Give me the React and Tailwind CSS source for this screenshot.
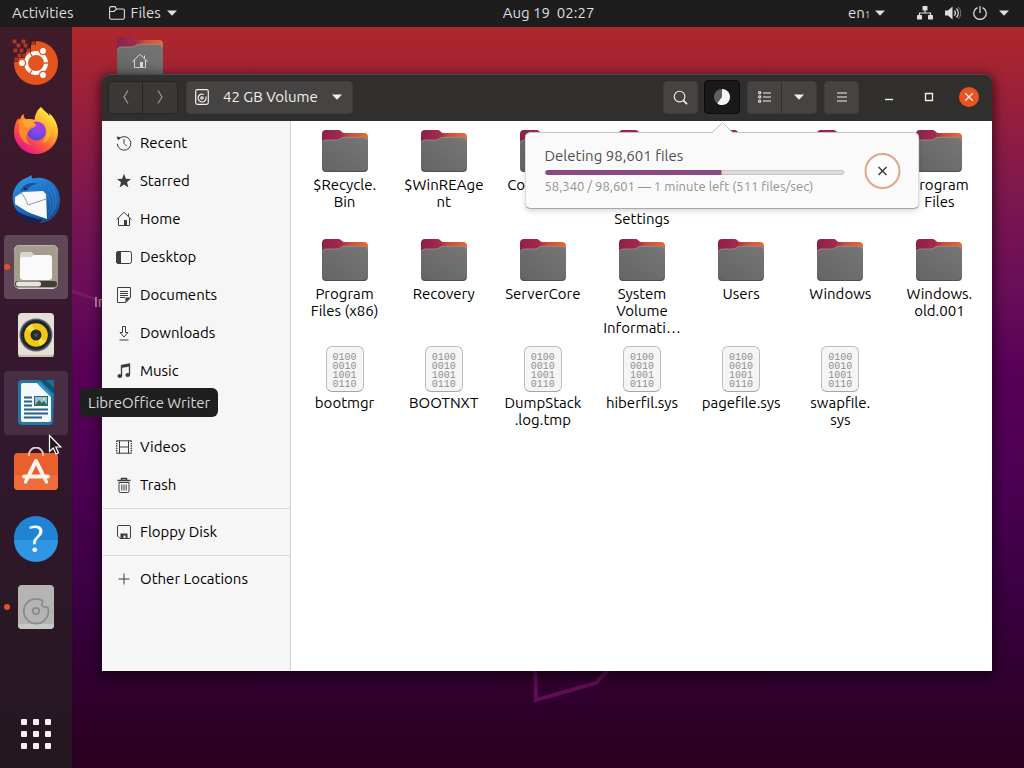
import { useState } from 'react';

function Caret({ className = 'w-[10px] h-[6px]' }) {
  return (
    <svg viewBox="0 0 10 6" className={className} fill="currentColor" aria-hidden="true">
      <path d="M0 .5h10L5 5.8z" />
    </svg>
  );
}

// 16px symbolic icons
const symbolic = {
  recent: (
    <>
      <path d="M2.6 4.4A6.8 6.8 0 1 1 1.3 8.8" />
      <path d="M8 4v4.4l2.8 2.8" />
      <path d="M.6 1.6l4.2.6-2.8 3z" fill="currentColor" stroke="none" />
    </>
  ),
  starred: (
    <path d="M8 .8l1.9 4.9 5.1.3-4 3.3 1.4 5.1L8 11.5l-4.4 2.9L5 9.3 1 6l5.1-.3z" fill="currentColor" stroke="none" />
  ),
  home: (
    <>
      <path d="M.6 8.6L8 1.2l7.4 7.4M2.500 7v7.500h11V7M12.500 2.500v3" />
      <path d="M8 9h3v5.500H8z" fill="currentColor" stroke="none" />
    </>
  ),
  desktop: (
    <>
      <rect x=".5" y="2.5" width="15" height="12" rx="2" />
      <path d="M2.500 2.500h2v12h-2a2 2 0 0 1-2-2v-8a2 2 0 0 1 2-2z" fill="currentColor" />
    </>
  ),
  documents: (
    <>
      <path d="M1.500.5h13v10l-4.500 5H1.500z" />
      <path d="M4 4.500h8M4 6.500h8M4 8.500h8M4 10.500h5" />
      <path d="M9.500 15.500v-5h5z" fill="currentColor" stroke="none" />
    </>
  ),
  downloads: <path d="M6.500 1.500h3v6H12L8 12 4 7.500h2.500zM3.500 15h9" />,
  music: (
    <>
      <path d="M5.500 13V2.500l8-1.500v10" strokeWidth="1.3" />
      <path d="M5 2.300L14 .8v2.700L5 5z" fill="currentColor" stroke="none" />
      <ellipse cx="3.8" cy="13" rx="2.4" ry="2" fill="currentColor" stroke="none" />
      <ellipse cx="11.8" cy="12" rx="2.4" ry="2" fill="currentColor" stroke="none" />
    </>
  ),
  pictures: (
    <>
      <rect x=".5" y="2.5" width="15" height="11" />
      <path d="M2 12l4-5 3 3 2-2 3 4z" fill="currentColor" stroke="none" />
    </>
  ),
  videos: (
    <>
      <path d="M.7 1.500v13M15.300 1.500v13" strokeWidth="1.4" strokeDasharray="1.4 1" />
      <path d="M3.500 1.500v13M12.500 1.500v13M1 1.800h14M1 14.200h14M3.500 8h9" />
    </>
  ),
  trash: (
    <>
      <path d="M1.500 3.500h13M5.500 3V1.500h5V3" strokeWidth="1.4" />
      <path d="M3 5.500v8.500a1.500 1.500 0 0 0 1.500 1.500h7A1.500 1.500 0 0 0 13 14V5.500zM5.800 7.500v6M8 7.500v6M10.200 7.500v6" />
    </>
  ),
  floppy: (
    <>
      <path d="M3 1.500h10a1.500 1.500 0 0 1 1.500 1.500v10a1.500 1.500 0 0 1-1.500 1.500H4L1.500 12V3A1.500 1.500 0 0 1 3 1.500z" />
      <path d="M4.500 14.500v-5h7v5h-2v-3h-2v3z" fill="currentColor" stroke="none" />
    </>
  ),
  plus: <path d="M8 2.500v11M2.500 8h11" />,
};

function Symbolic({ name, className = 'size-4' }) {
  return (
    <svg viewBox="0 0 16 16" className={className} fill="none" stroke="currentColor" strokeWidth="1" aria-hidden="true">
      {symbolic[name]}
    </svg>
  );
}

function FolderIcon() {
  return (
    <svg viewBox="0 0 46 42" className="w-[46px] h-[42px] shrink-0" aria-hidden="true">
      <defs>
        <linearGradient id="folder-back" x1="0" x2="1">
          <stop offset="0" stopColor="#8b2148" />
          <stop offset="0.42" stopColor="#a32b4c" />
          <stop offset="0.6" stopColor="#c94f38" />
          <stop offset="1" stopColor="#e96a30" />
        </linearGradient>
        <linearGradient id="folder-front" x1="0" y1="1" x2="1" y2="0">
          <stop offset="0" stopColor="#646464" />
          <stop offset="1" stopColor="#767676" />
        </linearGradient>
      </defs>
      <path d="M4 0h13c2 0 3 3 5 3h20a4 4 0 0 1 4 4v14H0V4a4 4 0 0 1 4-4z" fill="url(#folder-back)" />
      <path d="M0 14a4 4 0 0 1 4-4h11c3 0 4-2.700 7-2.700h20a4 4 0 0 1 4 4V38a4 4 0 0 1-4 4H4a4 4 0 0 1-4-4z" fill="url(#folder-front)" />
      <path d="M.5 13a3.500 3.500 0 0 1 3.500-3h11c3 0 4-2.700 7-2.700h20a3.500 3.500 0 0 1 3.500 3" fill="none" stroke="#a08f90" strokeWidth="0.8" />
      <path d="M1 39a4 4 0 0 0 3 2.500h38a4 4 0 0 0 3-2.500" fill="none" stroke="#505050" />
    </svg>
  );
}

function BinaryIcon() {
  return (
    <div className="w-[38px] h-[46px] rounded-md border border-[#bdbdbd] border-b-[#a5a5a5] bg-[#f5f5f5] pt-[6px] text-center font-['Liberation_Mono',monospace] text-[10px] leading-[9px] text-[#8f8f8f]">
      <div>0100</div>
      <div>0010</div>
      <div>1001</div>
      <div>0110</div>
    </div>
  );
}

function UbuntuLogo() {
  const bits = [[1, 2], [10, 2], [5, 6], [12, 6], [20, 4], [2, 11], [8, 11], [15, 11], [6, 16], [11, 16], [3, 20]];
  return (
    <svg viewBox="0 1 48 48" className="size-12" aria-hidden="true">
      <circle cx="24" cy="25" r="22" fill="#e4541f" />
      <path d="M0 0h24v7h-5v7h-5v6H7v4H0z" fill="#451a28" />
      {bits.map(([x, y]) => (
        <rect key={`${x}-${y}`} x={x} y={y} width="3" height="3" fill="#a8301c" stroke="#c94a28" strokeWidth="0.6" />
      ))}
      <circle cx="24" cy="25" r="10" fill="none" stroke="#fff" strokeWidth="4" />
      <path d="M32 25h5M20 18l-3-5M20 32l-3 5" stroke="#e4541f" strokeWidth="1.3" />
      <g fill="#fff" stroke="#e4541f" strokeWidth="1.4">
        <circle cx="31" cy="13" r="3.6" />
        <circle cx="10" cy="25" r="3.6" />
        <circle cx="31" cy="37" r="3.6" />
      </g>
    </svg>
  );
}

function FirefoxLogo() {
  return (
    <svg viewBox="0 0 48 48" className="size-12" aria-hidden="true">
      <defs>
        <linearGradient id="ff-body" x1="0.85" y1="0.1" x2="0.25" y2="0.95">
          <stop offset="0" stopColor="#fff04a" />
          <stop offset="0.35" stopColor="#ffae28" />
          <stop offset="0.65" stopColor="#ff5a3c" />
          <stop offset="1" stopColor="#e8158c" />
        </linearGradient>
        <radialGradient id="ff-globe" cx="0.6" cy="0.25" r="0.8">
          <stop offset="0" stopColor="#b833e1" />
          <stop offset="0.5" stopColor="#7a4be8" />
          <stop offset="1" stopColor="#5a3fc8" />
        </radialGradient>
      </defs>
      <path d="M29 0c2 3 6 5 8.500 9 0-1 0-2-.4-3C42 10 46 17 46 25c0 12-10 22-22 22S2 37 2 25c0-6 2-11 4.500-14 .2 2 .6 3 1.200 4C8 11 9.500 8 11.500 7c0 3 1.500 5 3 5.500 2-.8 6-.5 8 .5.500-5 2.500-10 6.500-13z" fill="url(#ff-body)" />
      <circle cx="24.5" cy="24" r="9.5" fill="url(#ff-globe)" />
      <path d="M7 12c3 1 5 0 8 1 3 .5 5 3 9 5 0 2-4 3-5.500 4-1 .8-2 2-3.500 5-2 5 1 9 4 11-9-2-13-10-12-18z" fill="#ff8a2a" />
      <path d="M10 14c4-3 10-2 14 4-3 2-6 1-9 3-2-1-4-4-5-7z" fill="#ffa436" />
      <path d="M35 21c1 6-1 12-6 15 6 0 10-6 9-12 0-6-4-9-8-12 2 3 4 5 5 9z" fill="#ffbd2f" opacity="0.8" />
    </svg>
  );
}

function ThunderbirdLogo() {
  return (
    <svg viewBox="0 0 48 48" className="size-12" aria-hidden="true">
      <defs>
        <linearGradient id="tb-body" x1="0.3" y1="0" x2="0.8" y2="1">
          <stop offset="0" stopColor="#2c93e0" />
          <stop offset="0.5" stopColor="#1d6cc0" />
          <stop offset="1" stopColor="#174a8e" />
        </linearGradient>
      </defs>
      <path d="M20 0c-1 2 0 3 1 3.500C36 0 48 11 48 25c0 13-9 23-21 23 2-1 3-2 4-4-9 2-21-1-26-8C-2 27-1 13 10 5c3-2 7-3 10-5z" fill="url(#tb-body)" />
      <path d="M3 22l8-5 20-1 3 3 1 25c-5-2-13-4-21-8L3 29z" fill="#f7f9fb" />
      <path d="M8 17c4 3 6 8 8 13l18-6" fill="none" stroke="#8d9aa8" strokeWidth="1" />
      <path d="M8 18c2-8 9-12 18-9-6 0-9 3-11 7-3-2-5-1-7 2z" fill="#174f96" />
      <circle cx="13" cy="14" r="1.1" fill="#0a2140" />
      <path d="M3 34c4 4 9 6 16 8 5 1.500 8 3 11 3-2 2-5 3-8 3C13 48 6 42 3 34z" fill="#1c2152" />
      <path d="M36 13c7 8 8 20 0 29M40 12c6 9 5 21-1 28M34 18c5 6 6 14 2 20" fill="none" stroke="#57aef0" strokeWidth="0.9" opacity="0.4" />
    </svg>
  );
}

function FilesLogo() {
  return (
    <svg viewBox="0 0 48 48" className="size-12" aria-hidden="true">
      <rect x="2" y="2" width="44" height="44" rx="5" fill="#a49c8c" />
      <path d="M2.500 7a5 5 0 0 1 5-4.500h33a5 5 0 0 1 5 4.500" fill="none" stroke="#bdb6a9" />
      <path d="M8 12a3 3 0 0 1 3-3h8c2 0 2 3 4 3h12v8H8z" fill="#dad5cb" />
      <path d="M8 17c0-2 1-3 3-3h7c2 0 3-2 5-2h14a3 3 0 0 1 3 3v19a3 3 0 0 1-3 3H11a3 3 0 0 1-3-3z" fill="#fbfafa" />
      <rect x="3" y="38" width="42" height="6" rx="3" fill="#3f3c39" />
      <rect x="4" y="38.5" width="25" height="5" rx="2.5" fill="#e6e4e0" />
      <path d="M6 45.500h36" stroke="#d8d3ca" />
    </svg>
  );
}

function RhythmboxLogo() {
  return (
    <svg viewBox="0 0 48 48" className="size-12" aria-hidden="true">
      <rect x="6" y="2" width="36" height="44" rx="4" fill="#e6dfd6" />
      <rect x="6.5" y="44" width="35" height="2" rx="1" fill="#c9c0b6" />
      <circle cx="24" cy="24" r="16.5" fill="#55606a" />
      <circle cx="24" cy="24" r="15" fill="#22262b" />
      <circle cx="24" cy="24" r="11.8" fill="#f0c814" />
      <path d="M24 24L14 17.700A11.800 11.800 0 0 1 20 12.900zM24 24l10 6.300a11.800 11.800 0 0 1-6 4.800z" fill="#fadf45" />
      <circle cx="24" cy="24" r="5.5" fill="#292b2c" />
      <circle cx="24" cy="24" r="2" fill="#4a4a48" />
    </svg>
  );
}

function WriterLogo() {
  return (
    <svg viewBox="0 0 48 48" className="size-12" aria-hidden="true">
      <path d="M10 1h32v16l-1 25a4 4 0 0 1-4 4H10a4 4 0 0 1-4-4V5a4 4 0 0 1 4-4z" fill="#1f7ba6" />
      <path d="M28 1h14v14z" fill="#11506f" />
      <path d="M34 1h8v8z" fill="#1c6e95" />
      <path d="M11 4h14l14 14v23a2 2 0 0 1-2 2H11a2 2 0 0 1-2-2V6a2 2 0 0 1 2-2z" fill="#f4f9fb" />
      <path d="M25 4l14 14v-3L28 3z" fill="#2e9ac5" />
      <path d="M12 18.500h8M12 22.500h8M12 26.500h8M12 30.500h24M12 34.500h24M12 38.500h18" stroke="#2a6384" strokeWidth="1.8" />
      <rect x="22" y="17" width="14" height="10" fill="#2a6384" />
      <rect x="23" y="18" width="12" height="8" fill="#8fc4dc" />
      <path d="M23 26l4-5 3 3 2-2 3 4z" fill="#3a6b3a" />
      <circle cx="32" cy="20" r="1.2" fill="#f2dd63" />
    </svg>
  );
}

function SoftwareLogo() {
  return (
    <svg viewBox="0 0 48 48" className="size-12" aria-hidden="true">
      <rect x="2" y="6" width="44" height="37" rx="4" fill="#e95f2d" />
      <path d="M2 28h44v11a4 4 0 0 1-4 4H6a4 4 0 0 1-4-4z" fill="#ef7440" opacity="0.7" />
      <path d="M17 9V7.500a7 7 0 0 1 14 0V9" fill="none" stroke="#f6cdb8" strokeWidth="1.8" />
      <g stroke="#fdf3ea" fill="none" strokeLinejoin="round" strokeLinecap="round">
        <path d="M17.500 27L24 14l6.500 13" strokeWidth="4" />
        <path d="M12 29.500h24" strokeWidth="4" />
        <path d="M15.500 31l-2 4M32.500 31l2 4" strokeWidth="3.5" />
      </g>
    </svg>
  );
}

function HelpLogo() {
  return (
    <svg viewBox="0 0 48 48" className="size-12" aria-hidden="true">
      <circle cx="24" cy="23" r="22" fill="#2183d5" />
      <path d="M2 25h44a22 22 0 0 1-44 0z" fill="#2e96e2" />
      <text x="24" y="37" textAnchor="middle" fontFamily="Ubuntu, Noto Sans, sans-serif" fontSize="38" fill="#fff">?</text>
    </svg>
  );
}

function DiskLogo() {
  return (
    <svg viewBox="0 0 48 48" className="size-12" aria-hidden="true">
      <rect x="6" y="2" width="36" height="44" rx="4" fill="#b5b4b4" />
      <path d="M6 41h36v1a4 4 0 0 1-4 4H10a4 4 0 0 1-4-4z" fill="#c9c8c8" />
      <path d="M35.500 23.500A12.300 12.300 0 1 1 31 18" fill="none" stroke="#8c8b8b" strokeWidth="1.8" />
      <path d="M31 18l-1.500 4 3 2.500 3-.8" fill="none" stroke="#8c8b8b" strokeWidth="1.5" />
      <circle cx="24" cy="28" r="3.2" fill="none" stroke="#8c8b8b" strokeWidth="1.8" />
    </svg>
  );
}

const dockItems = [
  { name: 'Install Ubuntu', icon: UbuntuLogo },
  { name: 'Firefox', icon: FirefoxLogo },
  { name: 'Thunderbird Mail', icon: ThunderbirdLogo },
  { name: 'Files', icon: FilesLogo, running: true, className: 'bg-white/20' },
  { name: 'Rhythmbox', icon: RhythmboxLogo },
  { name: 'LibreOffice Writer', icon: WriterLogo, tooltip: true, className: 'bg-white/10' },
  { name: 'Ubuntu Software', icon: SoftwareLogo },
  { name: 'Help', icon: HelpLogo },
  { name: 'Disk', icon: DiskLogo, running: true },
];

const places = [
  { name: 'Recent', icon: 'recent' },
  { name: 'Starred', icon: 'starred' },
  { name: 'Home', icon: 'home' },
  { name: 'Desktop', icon: 'desktop' },
  { name: 'Documents', icon: 'documents' },
  { name: 'Downloads', icon: 'downloads' },
  { name: 'Music', icon: 'music' },
  { name: 'Pictures', icon: 'pictures' },
  { name: 'Videos', icon: 'videos' },
  { name: 'Trash', icon: 'trash' },
];

const entries = [
  { label: '$Recycle.\nBin' },
  { label: '$WinREAge\nnt' },
  { label: 'Config.Msi' },
  { label: 'Documents\nand\nSettings' },
  { label: 'inetpub' },
  { label: 'PerfLogs' },
  { label: 'Program\nFiles' },
  { label: 'Program\nFiles (x86)' },
  { label: 'Recovery' },
  { label: 'ServerCore' },
  { label: 'System\nVolume\nInformati…' },
  { label: 'Users' },
  { label: 'Windows' },
  { label: 'Windows.\nold.001' },
  { label: 'bootmgr', file: true },
  { label: 'BOOTNXT', file: true },
  { label: 'DumpStack\n.log.tmp', file: true },
  { label: 'hiberfil.sys', file: true },
  { label: 'pagefile.sys', file: true },
  { label: 'swapfile.\nsys', file: true },
];

function TopBar() {
  return (
    <header className="flex items-center h-[27px] shrink-0 pb-px bg-[#1d1d1d] text-[#dedede]">
      <div className="flex items-center grow basis-[88px]">
        <button className="pl-3">Activities</button>
        <button className="flex items-center ml-[35px]">
          <svg viewBox="0 0 16 14" className="w-4 h-[14px] mr-[6px]" fill="none" stroke="currentColor" strokeWidth="1.1" aria-hidden="true">
            <path d="M.6 11.500V2A1.400 1.400 0 0 1 2 .6h4L7.500 3h6.500a1.400 1.400 0 0 1 1.400 1.400v7.200a1.600 1.600 0 0 1-1.600 1.600H2.200A1.600 1.600 0 0 1 .6 11.500zM.6 5.500H5L7.500 3" />
          </svg>
          Files
          <Caret className="w-[10px] h-[6px] ml-[6px]" />
        </button>
      </div>
      <button>Aug 19&nbsp; 02:27</button>
      <div className="flex items-center justify-end grow basis-0 pr-[15px]">
        <button className="flex items-center mr-8">
          en
          <span className="pt-1 text-[9px] leading-3">1</span>
          <Caret className="w-[10px] h-[6px] ml-[5px]" />
        </button>
        <button className="flex items-center" aria-label="System menu">
          <svg viewBox="0 0 16 14" className="w-4 h-[14px]" aria-hidden="true">
            <g fill="currentColor">
              <rect x="5.5" y="0" width="5" height="4.5" rx=".6" />
              <rect x="0" y="9" width="5" height="4.5" rx=".6" />
              <rect x="11" y="9" width="5" height="4.5" rx=".6" />
            </g>
            <path d="M8 4v3M2.500 9.500V7h11v2.500" fill="none" stroke="currentColor" strokeWidth="1.2" />
          </svg>
          <svg viewBox="0 0 16 14" className="w-4 h-[14px] ml-3" aria-hidden="true">
            <path d="M0 4.500h3L7.500.5v13L3 9.500H0z" fill="currentColor" />
            <path d="M9.500 4.500a4 4 0 0 1 0 5M11.500 2.500a6.500 6.500 0 0 1 0 9" fill="none" stroke="currentColor" strokeWidth="1.2" />
            <path d="M13.300 1a8.500 8.500 0 0 1 0 12" fill="none" stroke="#777" />
          </svg>
          <svg viewBox="0 0 14 14" className="size-[14px] ml-3" fill="none" stroke="currentColor" strokeWidth="1.2" aria-hidden="true">
            <path d="M4.500 1.600a6.200 6.200 0 1 0 5 0M7 0v7" />
          </svg>
          <Caret className="w-[10px] h-[6px] ml-3" />
        </button>
      </div>
    </header>
  );
}

function Dock() {
  return (
    <nav className="relative z-20 flex flex-col items-center gap-1 w-[72px] shrink-0 pt-1 pb-[2px] bg-linear-to-b from-[#401b29] via-[#34172f] to-[#241820]">
      {dockItems.map(({ name, icon: Icon, running, tooltip, className }) => (
        <button
          key={name}
          aria-label={name}
          className={`relative flex items-center justify-center size-16 rounded ${className || ''}`}
        >
          <Icon />
          {running && <span className="absolute left-0 size-[6px] rounded-full bg-[#e2512a]" />}
          {tooltip && (
            <span className="absolute left-[76px] top-[17px] px-2 h-[29px] leading-[29px] rounded-md bg-[#1f1f1f] text-[#d6d6d6] whitespace-nowrap">
              {name}
            </span>
          )}
        </button>
      ))}
      <button aria-label="Show Applications" className="mt-auto grid grid-cols-[repeat(3,6px)] content-center justify-center gap-[6px] size-16">
        {Array.from({ length: 9 }).map((_, i) => (
          <span key={i} className="size-[6px] rounded-[1px] bg-[#f6eef4]" />
        ))}
      </button>
    </nav>
  );
}

function ProgressPopover() {
  const done = 58340;
  const total = 98601;
  return (
    <div className="absolute z-10 top-[52px] left-1/2 -translate-x-1/2 w-[395px] h-[77px] flex items-center pl-[19px] pr-5 rounded-md border border-[#c3c3c3] border-b-[#a8a8a8] bg-[#fafafa] shadow-md">
      <svg viewBox="0 0 22 12" className="absolute -top-[11px] left-1/2 -translate-x-1/2 w-[22px] h-3" aria-hidden="true">
        <path d="M0 11.500L11 .7l11 10.800V12H0z" fill="#fafafa" />
        <path d="M0 11L11 .7 22 11" fill="none" stroke="#bdbdbd" />
      </svg>
      <div className="flex-1 pb-px">
        <div className="text-left text-[#4f4f4f] leading-5">Deleting 98,601 files</div>
        <div
          role="progressbar"
          aria-label="Deleting files"
          aria-valuenow={done}
          aria-valuemax={total}
          className="h-[5px] mt-1 mb-[3px] rounded-sm border border-[#c9c6c9] bg-[#dcdadc]"
        >
          <div className="h-[5px] -mt-px rounded-l-sm bg-[#8a4985]" style={{ width: `${(done / total) * 100}%` }} />
        </div>
        <div className="text-left text-[13px] leading-4 text-[#929292]">
          58,340 / 98,601 — 1 minute left (511 files/sec)
        </div>
      </div>
      <button aria-label="Cancel" className="flex items-center justify-center ml-5 -mr-[2px] size-9 rounded-full border-2 border-[#e0a68d] bg-[#fcfcfc] text-[#3c3c3c]">
        <svg viewBox="0 0 10 10" className="size-[10px]" fill="none" stroke="currentColor" strokeWidth="1.5" aria-hidden="true">
          <path d="M1 1l8 8M9 1L1 9" />
        </svg>
      </button>
    </div>
  );
}

function HeaderBar({ showProgress, onToggle }) {
  return (
    <div className="flex items-center h-[47px] shrink-0 pl-[6px] pr-[13px] pb-px rounded-t-lg bg-[#302f2e] shadow-[inset_0_1px_0_#4b4946] text-[#f0f0ee]">
      <div className="flex h-[33px] rounded border border-[#262524] bg-[#3a3938] text-[#9a9a98]">
        <button aria-label="Back" className="flex items-center justify-center w-[34px] border-r border-[#262524]">
          <svg viewBox="0 0 8 16" className="w-2 h-4" fill="none" stroke="currentColor" strokeWidth="1.2"><path d="M6 1.500L2 8l4 6.500" /></svg>
        </button>
        <button aria-label="Forward" className="flex items-center justify-center w-[34px]">
          <svg viewBox="0 0 8 16" className="w-2 h-4" fill="none" stroke="currentColor" strokeWidth="1.2"><path d="M2 1.500L6 8l-4 6.500" /></svg>
        </button>
      </div>
      <button className="flex items-center h-[33px] ml-2 pl-2 pr-[10px] rounded border border-[#3f3e3c] bg-[#464443]">
        <svg viewBox="0 0 14 16" className="w-[14px] h-4 mr-[14px]" fill="none" stroke="currentColor" strokeWidth="1.2" aria-hidden="true">
          <rect x=".7" y=".7" width="12.6" height="14.6" rx="1.8" />
          <path d="M10.800 7.500A4 4 0 1 1 9 5.500" />
          <circle cx="7" cy="9" r="1.2" />
        </svg>
        42 GB Volume
        <Caret className="w-[10px] h-[6px] ml-[14px]" />
      </button>
      <div className="flex-1" />
      <button aria-label="Search" className="flex items-center justify-center w-[35px] h-[33px] rounded border border-[#3f3e3c] bg-[#464443]">
        <svg viewBox="0 0 16 16" className="size-[15px]" fill="none" stroke="currentColor" strokeWidth="1.2" aria-hidden="true">
          <circle cx="7" cy="7" r="5.7" />
          <path d="M11 11l4 4" strokeWidth="1.8" />
        </svg>
      </button>
      <div className="relative ml-[6px]">
        <button
          aria-label="File operations"
          onClick={onToggle}
          className="flex items-center justify-center w-9 h-[34px] rounded border border-[#0c0c0c] bg-[#191919]"
        >
          <svg viewBox="0 0 16 16" className="size-4" aria-hidden="true">
            <circle cx="8" cy="8" r="8" fill="#5f5f5f" />
            <path d="M8 0a8 8 0 1 1-4.700 14.500L8 8z" fill="#f5f5f5" />
          </svg>
        </button>
        {showProgress && <ProgressPopover />}
      </div>
      <div className="flex h-[33px] ml-[7px] rounded border border-[#3f3e3c] bg-[#464443]">
        <button aria-label="List view" className="flex items-center justify-center w-[34px] border-r border-[#2f2e2d]">
          <svg viewBox="0 0 13 12" className="w-[13px] h-3" fill="none" stroke="currentColor" aria-hidden="true">
            <path d="M5 2h8M5 6h8M5 10h8" strokeWidth="1.2" />
            <path d="M.7.7h2v2h-2zM.7 4.900h2v2h-2zM.7 9.200h2v2h-2z" />
          </svg>
        </button>
        <button aria-label="View options" className="flex items-center justify-center w-[34px]">
          <Caret />
        </button>
      </div>
      <button aria-label="Menu" className="flex items-center justify-center w-[35px] h-[33px] ml-[7px] rounded border border-[#3f3e3c] bg-[#464443]">
        <svg viewBox="0 0 10 10" className="size-[10px]" stroke="currentColor" strokeWidth="1.2"><path d="M0 1h10M0 5h10M0 9h10" /></svg>
      </button>
      <button aria-label="Minimize" className="ml-5 p-[5px]">
        <svg viewBox="0 0 10 10" className="size-[10px]" stroke="currentColor" strokeWidth="1.4"><path d="M1 7.500h8" /></svg>
      </button>
      <button aria-label="Maximize" className="ml-5 p-[5px]">
        <svg viewBox="0 0 10 10" className="size-[10px]" fill="none" stroke="currentColor" strokeWidth="1.3"><path d="M1.500 1.500h7v7h-7z" /></svg>
      </button>
      <button aria-label="Close" className="flex items-center justify-center ml-5 size-5 rounded-full bg-[#e9541f]">
        <svg viewBox="0 0 10 10" className="size-[10px]" stroke="currentColor" strokeWidth="1.3"><path d="M1.200 1.200l7.600 7.600M8.800 1.200L1.200 8.800" /></svg>
      </button>
    </div>
  );
}

function PlaceRow({ name, icon }) {
  return (
    <li>
      <button className="flex items-center w-full h-[38px] pl-[14px] gap-2 text-black">
        <Symbolic name={icon} className="size-4 text-[#3d3d3d]" />
        {name}
      </button>
    </li>
  );
}

function Sidebar() {
  return (
    <aside className="w-[189px] shrink-0 pt-[3px] border-r border-[#d2d2d2] bg-[#f6f6f6]">
      <ul>
        {places.map((place) => (
          <PlaceRow key={place.name} {...place} />
        ))}
      </ul>
      <ul className="mt-1 py-1 border-y border-[#dadada]">
        <PlaceRow name="Floppy Disk" icon="floppy" />
      </ul>
      <ul className="mt-1">
        <PlaceRow name="Other Locations" icon="plus" />
      </ul>
    </aside>
  );
}

function FileGrid() {
  return (
    <div className="flex-1 grid grid-cols-[repeat(auto-fill,minmax(96px,1fr))] content-start gap-y-[10px] pl-1 pr-[3px] pt-[7px] bg-white text-black">
      {entries.map((entry) => (
        <button key={entry.label} className="flex flex-col items-center justify-start">
          <span className={entry.file ? 'block h-12' : 'block h-12 pt-[2px]'}>
            {entry.file ? <BinaryIcon /> : <FolderIcon />}
          </span>
          <span className="whitespace-pre text-center leading-[17px]">{entry.label}</span>
        </button>
      ))}
    </div>
  );
}

export default function App() {
  const [showProgress, setShowProgress] = useState(true);

  return (
    <div className="flex flex-col min-h-screen overflow-hidden font-['Ubuntu','Noto_Sans',sans-serif] text-[15px]">
      <TopBar />
      <div className="flex flex-1">
        <Dock />
        <main className="relative flex flex-1 pt-[47px] pr-8 pb-[97px] pl-[30px] bg-[linear-gradient(180deg,#ae282b_0%,#981f3c_11%,#7c174f_23%,#690e58_35%,#560057_47%,#4c0052_61%,#3c0044_75%,#310030_87%,#29001f_100%)]">
          <svg viewBox="0 0 952 741" className="absolute inset-0 size-full" fill="none" strokeWidth="4" aria-hidden="true">
            <path d="M0 264l40 14M24 378h12" stroke="#8b2260" strokeWidth="3" opacity="0.6" />
            <path d="M463 630l1 43 60-17 24-26" stroke="#5f0c56" />
          </svg>
          <div className="absolute left-[45px] top-[10px] text-[#dcd6d8]">
            <FolderIcon />
            <Symbolic name="home" className="absolute left-[15px] top-4 size-4" />
          </div>
          <span className="absolute left-[22px] top-[264px] text-[#e0c6d8] whitespace-nowrap">Install Ubuntu</span>

          <section className="relative z-10 flex flex-col flex-1 rounded-t-lg shadow-[0_3px_12px_2px_rgba(0,0,0,0.6)]">
            <HeaderBar showProgress={showProgress} onToggle={() => setShowProgress(!showProgress)} />
            <div className="flex flex-1">
              <Sidebar />
              <FileGrid />
            </div>
          </section>
        </main>
      </div>

      <svg viewBox="0 0 14 22" className="absolute z-30 left-[48px] top-[434px] w-[14px] h-[22px]" aria-hidden="true">
        <path d="M1.500 1.500v16l3.800-3.500 2.700 6 2.500-1.200-2.700-5.800h5z" fill="#241820" stroke="#fff" strokeWidth="1.2" />
      </svg>
    </div>
  );
}
